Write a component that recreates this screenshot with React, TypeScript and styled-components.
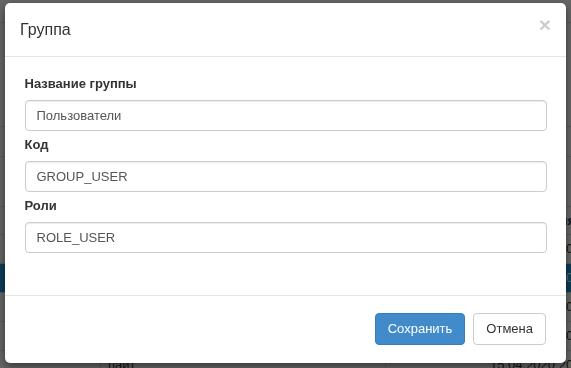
import React from "react";
import styled, { createGlobalStyle } from "styled-components";

const GlobalStyle = createGlobalStyle`
  html, body { margin: 0; padding: 0; width: 100%; height: 100%; overflow: hidden; }
  body {
    font-family: "Liberation Sans", Arial, sans-serif;
    font-size: 13px;
    color: #333;
    background: #fff;
  }
  * { box-sizing: border-box; }
`;

/* ---------- page behind the modal ---------- */
const Page = styled.div`
  display: flex;
  flex-direction: column;
  width: 571px;
`;

const Band = styled.div<{ $h: number }>`
  height: ${(p) => p.$h}px;
  border-bottom: 1px solid #ddd;
  flex: none;
`;

const Row = styled.div<{ $active?: boolean; $head?: boolean }>`
  display: grid;
  grid-template-columns: 100px 285px 186px;
  height: ${(p) => (p.$head ? 28 : 29)}px;
  border-bottom: 1px solid #ddd;
  background: ${(p) => (p.$active ? "#1e96dc" : "transparent")};
  color: ${(p) => (p.$active ? "#fff" : "#333")};
  font-weight: ${(p) => (p.$head ? 700 : 400)};
  line-height: 28px;
  white-space: nowrap;
`;

const Cell = styled.div<{ $pad?: number }>`
  padding-left: ${(p) => p.$pad ?? 7}px;
  border-left: 1px solid #ddd;
  min-width: 0;
  overflow: hidden;
  text-overflow: clip;
  &:first-child { border-left: none; }
`;

/* ---------- modal ---------- */
const Backdrop = styled.div`
  position: fixed;
  inset: 0;
  background: rgba(0, 0, 0, 0.6);
`;

const ModalLayer = styled.div`
  position: fixed;
  inset: 0;
  padding: 3px 5px;
  display: flex;
  align-items: flex-start;
`;

const Dialog = styled.div`
  width: 561px;
  background: #fff;
  border-radius: 5px;
  box-shadow: 0 3px 9px rgba(0, 0, 0, 0.5);
  display: flex;
  flex-direction: column;
`;

const Header = styled.div`
  display: flex;
  align-items: flex-start;
  justify-content: space-between;
  padding: 15px;
  border-bottom: 1px solid #e5e5e5;
`;

const Title = styled.h4`
  margin: 0;
  font-size: 16px;
  line-height: 23px;
  font-weight: 400;
  color: #333;
`;

const Close = styled.button`
  border: 0;
  background: transparent;
  padding: 0;
  margin-top: -4px;
  font-family: "Liberation Sans", Arial, sans-serif;
  font-size: 21px;
  font-weight: 700;
  line-height: 21px;
  color: #000;
  opacity: 0.2;
  cursor: pointer;
`;

const Body = styled.div`
  padding: 17px 19.5px 42px;
  display: flex;
  flex-direction: column;
  gap: 4px;
`;

const Group = styled.div`
  display: flex;
  flex-direction: column;
`;

const Label = styled.label`
  display: block;
  font-weight: 700;
  line-height: 20px;
  margin-bottom: 6px;
  color: #333;
`;

const Input = styled.input`
  height: 31px;
  width: 100%;
  padding: 6px 11px;
  font-family: "Liberation Sans", Arial, sans-serif;
  font-size: 13px;
  color: #555;
  background: #fff;
  border: 1px solid #ccc;
  border-radius: 4px;
  box-shadow: inset 0 1px 1px rgba(0, 0, 0, 0.075);
  outline: none;
`;

const Footer = styled.div`
  display: flex;
  justify-content: flex-end;
  gap: 8px;
  padding: 17px 20px 18px;
  border-top: 1px solid #e5e5e5;
`;

const Button = styled.button<{ $primary?: boolean }>`
  height: 32px;
  padding: 6px 12px;
  font-family: "Liberation Sans", Arial, sans-serif;
  font-size: 13px;
  line-height: 18px;
  border-radius: 4px;
  border: 1px solid ${(p) => (p.$primary ? "#357ebd" : "#ccc")};
  background: ${(p) => (p.$primary ? "#428bca" : "#fff")};
  color: ${(p) => (p.$primary ? "#fff" : "#333")};
  cursor: pointer;
`;

const fields = [
  { label: "Название группы", value: "Пользователи" },
  { label: "Код", value: "GROUP_USER" },
  { label: "Роли", value: "ROLE_USER" },
];

const rows = [
  { name: "Администраторы", date: "15.04.2020 20:00" },
  { name: "Менеджеры", date: "15.04.2020 20:00", active: true },
  { name: "Операторы", date: "15.04.2020 20:00" },
  { name: "Гости", date: "15.04.2020 20:00" },
  { name: "пайт", date: "15.04.2020 20:00" },
];

export default function App() {
  return (
    <>
      <GlobalStyle />
      <Page>
        <Band $h={23} />
        <Band $h={104} />
        <Band $h={30} />
        <Band $h={50} />
        <Row $head>
          <Cell />
          <Cell>Название</Cell>
          <Cell $pad={86}>Дата изменения</Cell>
        </Row>
        {rows.map((r) => (
          <Row key={r.name} $active={r.active}>
            <Cell />
            <Cell>{r.name}</Cell>
            <Cell $pad={104}>{r.date}</Cell>
          </Row>
        ))}
      </Page>
      <Backdrop />
      <ModalLayer>
        <Dialog>
          <Header>
            <Title>Группа</Title>
            <Close aria-label="Закрыть">×</Close>
          </Header>
          <Body>
            {fields.map((f) => (
              <Group key={f.label}>
                <Label>{f.label}</Label>
                <Input defaultValue={f.value} />
              </Group>
            ))}
          </Body>
          <Footer>
            <Button $primary>Сохранить</Button>
            <Button>Отмена</Button>
          </Footer>
        </Dialog>
      </ModalLayer>
    </>
  );
}
